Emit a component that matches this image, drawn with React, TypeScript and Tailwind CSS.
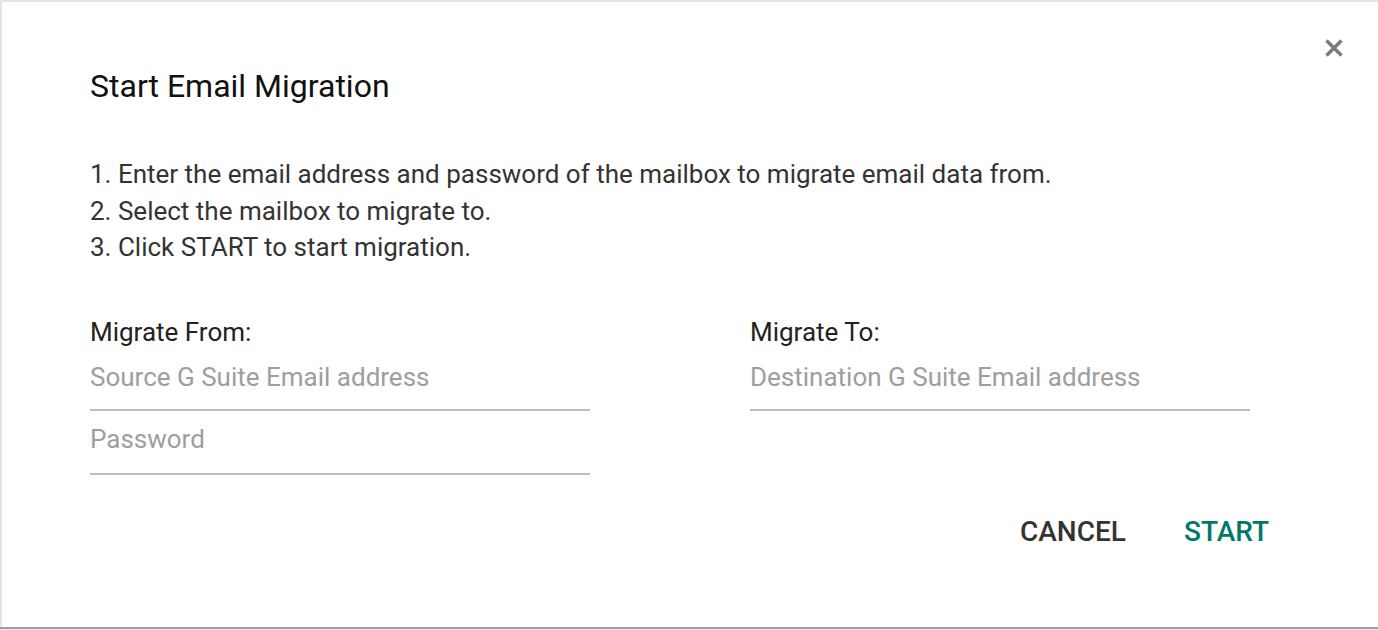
import React from "react";

export default function App() {
  return (
    <div className="w-[1378px] h-[630px] overflow-hidden bg-white" style={{ fontFamily: "Roboto, 'Noto Sans', sans-serif" }}>
      <div className="relative h-[627px] border-t-2 border-l-2 border-[#e3e3e3] bg-white">
        <button className="absolute right-[33px] top-[35px] w-[22px] h-[22px] flex items-center justify-center">
          <svg width="22" height="22" viewBox="0 0 22 22">
            <path d="M3.5 3.5 L18.5 18.5 M18.5 3.5 L3.5 18.5" stroke="#7a7a7a" strokeWidth="3.4" strokeLinecap="butt" />
          </svg>
        </button>
        <div className="pl-[88px] pr-[109px] pt-[64px]">
          <h1 className="text-[32px] leading-[40px] text-[#111]">Start Email Migration</h1>
          <div className="mt-[50px] text-[26px] leading-[36.5px] text-[#333]">
            <div>1. Enter the email address and password of the mailbox to migrate email data from.</div>
            <div>2. Select the mailbox to migrate to.</div>
            <div>3. Click START to start migration.</div>
          </div>
          <div className="mt-[48px] flex gap-[160px]">
            <div className="w-[500px]">
              <div className="text-[26px] leading-[36px] text-[#222]">Migrate From:</div>
              <div className="mt-[11px] h-[50px] border-b-2 border-[#bdbdbd] text-[26px] leading-[32px] text-[#9e9e9e]">Source G Suite Email address</div>
              <div className="mt-[12px] h-[52px] border-b-2 border-[#bdbdbd] text-[26px] leading-[32px] text-[#9e9e9e]">Password</div>
            </div>
            <div className="w-[500px]">
              <div className="text-[26px] leading-[36px] text-[#222]">Migrate To:</div>
              <div className="mt-[11px] h-[50px] border-b-2 border-[#bdbdbd] text-[26px] leading-[32px] text-[#9e9e9e]">Destination G Suite Email address</div>
            </div>
          </div>
          <div className="mt-[39px] flex justify-end gap-[58px]">
            <span className="text-[28px] font-medium leading-[36px] text-[#333]">CANCEL</span>
            <span className="text-[28px] font-medium leading-[36px] text-[#00796b]">START</span>
          </div>
        </div>
      </div>
      <div className="h-[2px] bg-[#9e9e9e]" />
      <div className="h-[1px] bg-[#e8e8e8]" />
    </div>
  );
}
